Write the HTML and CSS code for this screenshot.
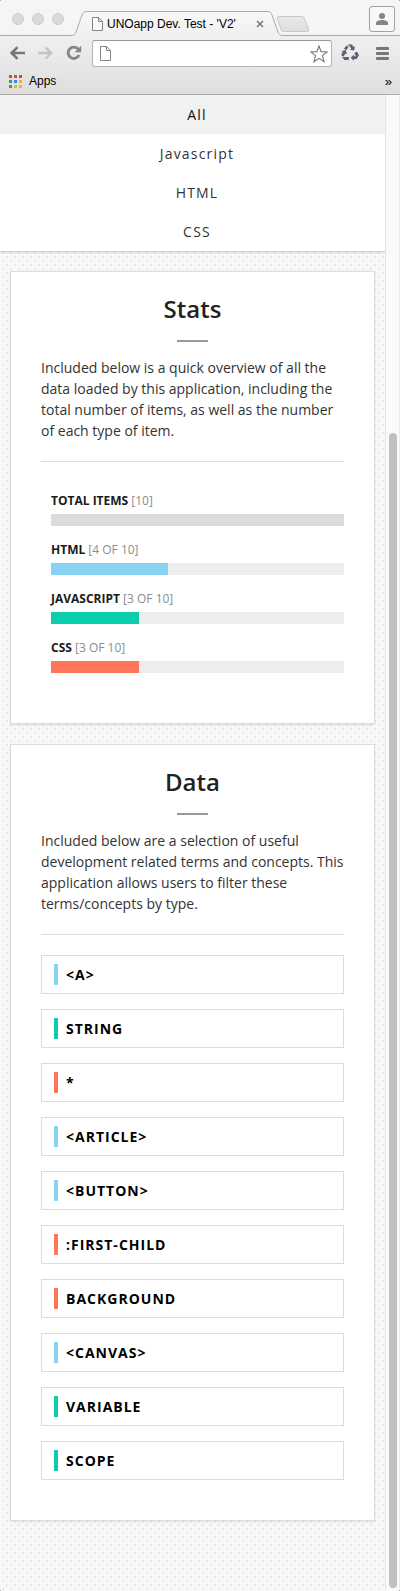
FILE: index.html
```html
<!DOCTYPE html>
<html lang="en">
<head>
<meta charset="utf-8">
<title>UNOapp Dev. Test - 'V2'</title>
<link rel="stylesheet" href="styles.css">
</head>
<body>
<div class="window">
  <header class="chrome">
    <div class="tabstrip">
      <svg class="tab-shape" width="400" height="36" viewBox="0 0 400 36">
        <defs>
          <linearGradient id="tabfill" x1="0" y1="0" x2="0" y2="1"><stop offset="0" stop-color="#f8f8f8"/><stop offset="1" stop-color="#f0f0f0"/></linearGradient>
          <linearGradient id="newfill" x1="0" y1="0" x2="0" y2="1"><stop offset="0" stop-color="#e9e9e9"/><stop offset="1" stop-color="#dedede"/></linearGradient>
        </defs>
        <path d="M0 35.5H71C74 35.5 75 34.5 76 32L82 15C83.200 12.500 84 11.500 87 11.500H267C270 11.500 271 12.500 272 15L278 32C279 34.500 280 35.500 283 35.500H400V36H0Z" fill="url(#tabfill)"/>
        <path d="M0 35.5H71C74 35.5 75 34.5 76 32L82 15C83.200 12.500 84 11.500 87 11.500H267C270 11.500 271 12.500 272 15L278 32C279 34.500 280 35.500 283 35.500H400" fill="none" stroke="#aaa"/>
        <path d="M279 16.500H301C303 16.500 304 17 304.500 19L308.500 29C309 31 308.500 31.500 307 31.500H284C282 31.500 281.500 31 281 29L277.500 19C277 17 277.500 16.500 279 16.500Z" fill="url(#newfill)" stroke="#c8c8c8"/>
      </svg>
      <div class="lights"><i class="light"></i><i class="light"></i><i class="light"></i></div>
      <div class="tab">
        <svg width="11" height="14" viewBox="0 0 11 14"><path d="M.5.5H6.500L10.500 4.500V13.500H.5ZM6.500.5V4.500H10.500" fill="#fafafa" stroke="#858585"/></svg>
        <span class="tab-title">UNOapp Dev. Test - 'V2'</span>
        <svg class="close" width="8" height="8" viewBox="0 0 8 8"><path d="M1 1L7 7M7 1L1 7" stroke="#777" stroke-width="1.500"/></svg>
      </div>
      <div class="profile"><svg width="12" height="12" viewBox="0 0 12 12"><circle cx="6" cy="3" r="3" fill="#858585"/><path d="M0 12V10C0 8 3 7 6 7S12 8 12 10V12Z" fill="#858585"/></svg></div>
    </div>
    <div class="toolbar">
      <svg class="back" width="15" height="14" viewBox="0 0 15 14"><path d="M15 7H2M7.500 1.200L1.700 7L7.500 12.800" fill="none" stroke="#777" stroke-width="2.600"/></svg>
      <svg class="forward" width="15" height="14" viewBox="0 0 15 14"><path d="M0 7H13M7.500 1.200L13.300 7L7.500 12.800" fill="none" stroke="#c4c4c4" stroke-width="2.300"/></svg>
      <svg class="reload" width="16" height="16" viewBox="0 0 16 16"><path d="M12.300 4.200A5.700 5.700 0 1 0 13.100 10" fill="none" stroke="#858585" stroke-width="2.800"/><path d="M15.200 .8V7.300H8.700Z" fill="#858585"/></svg>
      <div class="address">
        <svg width="11" height="15" viewBox="0 0 11 15"><path d="M.5.5H6.500L10.500 4.500V14.500H.5ZM6.500.5V4.500H10.500" fill="#fff" stroke="#858585"/></svg>
        <svg class="star" width="18" height="18" viewBox="0 0 18 18"><path d="M9 1L11.100 6.600L17.200 6.900L12.400 10.600L14.100 16.700L9 13.300L3.900 16.700L5.600 10.600L.8 6.900L6.900 6.600Z" fill="#fff" stroke="#777" stroke-width="1.100"/></svg>
      </div>
      <svg class="recycle" width="18" height="18" viewBox="0 0 18 18" fill="#59636e">
        <path d="M6.500.5H11L12.700 3.200L14.200 2.300L13 6.600L8.700 5.700L10.200 4.800L8.600 2.200Z"/><path d="M5.500 1.500L7.600 2.700L5.500 6.300L2.900 4.700Z"/>
        <path d="M16 7.500L17.900 11L15.700 15H13V16.700L9.600 13.700L13 10.800V12.200H15L13.200 9.200Z"/>
        <path d="M.3 7.200L4.700 6.100L6 10.500L4.300 9.600L2.900 12.200H1.200L.3 10.200L1.900 8Z"/><path d="M1.200 13H7.800V16H3.200Z"/>
      </svg>
      <div class="menu"><i class="menu-line"></i><i class="menu-line"></i><i class="menu-line"></i></div>
    </div>
    <div class="bookmarks">
      <div class="apps-grid"><i class="red"></i><i class="red"></i><i class="red"></i><i class="green"></i><i class="blue"></i><i class="yellow"></i><i class="green"></i><i class="yellow"></i><i class="yellow"></i></div>
      <span class="apps-label">Apps</span><span class="more">»</span>
    </div>
  </header>
  <div class="viewport">
    <main class="page">
      <nav class="filters">
        <a class="filter active">All</a><a class="filter">Javascript</a><a class="filter">HTML</a><a class="filter">CSS</a>
      </nav>
      <section class="card stats">
        <h2 class="heading">Stats</h2>
        <p class="intro">Included below is a quick overview of all the data loaded by this application, including the total number of items, as well as the number of each type of item.</p>
        <div class="bars">
          <div class="stat"><div class="label"><b>Total Items</b> [10]</div><div class="track"><div class="fill total" style="width:100%"></div></div></div>
          <div class="stat"><div class="label"><b>HTML</b> [4 of 10]</div><div class="track"><div class="fill html" style="width:40%"></div></div></div>
          <div class="stat"><div class="label"><b>Javascript</b> [3 of 10]</div><div class="track"><div class="fill js" style="width:30%"></div></div></div>
          <div class="stat"><div class="label"><b>CSS</b> [3 of 10]</div><div class="track"><div class="fill css" style="width:30%"></div></div></div>
        </div>
      </section>
      <section class="card data">
        <h2 class="heading">Data</h2>
        <p class="intro">Included below are a selection of useful development related terms and concepts. This application allows users to filter these terms/concepts by type.</p>
        <div class="terms">
          <div class="term"><i class="mark html"></i>&lt;a&gt;</div>
          <div class="term"><i class="mark js"></i>String</div>
          <div class="term"><i class="mark css"></i>*</div>
          <div class="term"><i class="mark html"></i>&lt;article&gt;</div>
          <div class="term"><i class="mark html"></i>&lt;button&gt;</div>
          <div class="term"><i class="mark css"></i>:first-child</div>
          <div class="term"><i class="mark css"></i>background</div>
          <div class="term"><i class="mark html"></i>&lt;canvas&gt;</div>
          <div class="term"><i class="mark js"></i>Variable</div>
          <div class="term"><i class="mark js"></i>Scope</div>
        </div>
      </section>
    </main>
    <aside class="scrollbar"><div class="thumb"></div></aside>
  </div>
</div>
</body>
</html>
```
FILE: styles.css
```css
* { box-sizing: border-box; }
html { background: #000; }
body { margin: 0; font-family: "Open Sans", sans-serif; }
svg { display: block; flex: none; }
.window { width: 400px; height: 1591px; display: flex; flex-direction: column; overflow: hidden; border-radius: 2px; background: #fafafa; }
.chrome { height: 95px; flex: none; background: linear-gradient(#f6f6f6 0, #f0f0f0 36px, #dedede 94px); border-bottom: 1px solid #adadad; font-family: "Liberation Sans", sans-serif; color: #000; }
.tabstrip { height: 36px; position: relative; display: flex; background: #f5f5f5; }
.tab-shape { position: absolute; left: 0; top: 0; }
.lights { position: relative; display: flex; gap: 8px; padding: 13px 0 0 12px; width: 92px; }
.light { width: 12px; height: 12px; border-radius: 50%; background: #dadada; border: 1px solid #cbcbcb; }
.tab { position: relative; display: flex; align-items: center; width: 172px; padding-top: 12px; }
.tab-title { font-size: 12px; margin-left: 4px; white-space: nowrap; }
.close { margin-left: auto; }
.profile { position: relative; margin: 6px 5px 0 auto; width: 26px; height: 26px; border: 1px solid #a2a2a2; border-radius: 3px; display: flex; align-items: center; justify-content: center; background: #f8f8f8; }
.toolbar { height: 34px; display: flex; align-items: center; padding: 0 11px 0 10px; }
.forward { margin-left: 13px; }
.reload { margin-left: 13px; }
.address { margin: 1px 0 0 10px; width: 240px; height: 27px; padding: 0 3px 0 7px; display: flex; align-items: center; justify-content: space-between; border: 1px solid #b5b5b5; border-top-color: #999; border-radius: 3px; background: #fff; }
.recycle { margin-left: 9px; }
.menu { margin-left: auto; width: 13px; display: grid; gap: 2px; }
.menu-line { height: 3px; border-radius: 1px; background: #777; }
.bookmarks { height: 22px; display: flex; align-items: center; padding: 0 8px 0 9px; font-size: 12px; }
.apps-grid { display: grid; grid-template-columns: repeat(3, 3px); gap: 2px; }
.apps-grid i { height: 3px; }
.red { background: #f03c37; }
.green { background: #3c9f55; }
.blue { background: #338af5; }
.yellow { background: #fab01e; }
.apps-label { margin-left: 7px; }
.more { margin-left: auto; font-size: 13px; }
.viewport { flex: 1; display: flex; }
.page { width: 385px; background-color: #fafafa; background-image: conic-gradient(from 0deg at 2px 2px, transparent 75%, #e7e7e7 0), conic-gradient(from 0deg at 2px 2px, transparent 75%, #e7e7e7 0), repeating-linear-gradient(45deg, #fbfbfb 0, #fbfbfb 1.4px, #f5f5f5 1.4px, #f5f5f5 2.828px); background-size: 8px 8px; background-position: 2px 5px, 6px 1px, 0 0; }
.filters { display: flex; flex-direction: column; background: #fff; border-bottom: 1px solid #d2d2d2; box-shadow: 0 1px 2px #0000001a; }
.filter { height: 39px; padding-left: 9px; text-align: center; font-size: 14px; line-height: 39px; letter-spacing: 1.2px; color: #333; }
.active { background: #f0f2f1; color: #111; }
.card { margin: 19px 10px 0; padding: 20px 30px 0; border: 1px solid #dcdcdc; background: #fff; box-shadow: 0 1px 2px #0000001a; }
.stats { height: 453px; }
.data { height: 777px; margin-top: 20px; }
.heading { margin: 0; font-size: 24px; font-weight: 600; line-height: 34px; color: #222; text-align: center; }
.heading::after { content: ""; display: block; width: 31px; height: 2px; margin: 14px auto 0; background: #999; }
.intro { margin: 0; padding: 15px 0 20px; height: 120px; border-bottom: 1px solid #dcdcdc; font-size: 14px; line-height: 21px; color: #333; }
.bars { padding: 29px 0 0 10px; display: grid; gap: 14px; }
.label { height: 23px; font-size: 12px; line-height: 20px; color: #8c8c8c; text-transform: uppercase; }
.label b { color: #1a1a1a; }
.track { height: 12px; background: #eee; }
.fill { height: 12px; }
.total { background: #dcdcdc; }
.html { background: #85d2f2; }
.js { background: #0bcfac; }
.css { background: #ff755a; }
.terms { display: grid; gap: 15px; padding-top: 20px; }
.term { height: 39px; display: flex; align-items: center; gap: 8px; padding-left: 12px; border: 1px solid #dcdcdc; font-size: 14px; font-weight: 700; letter-spacing: 1px; text-transform: uppercase; color: #000; }
.mark { width: 4px; height: 21px; }
.scrollbar { width: 15px; padding: 338px 0 0 3px; border-left: 1px solid #e5e5e5; border-right: 1px solid #ededed; background: #fafafa; }
.thumb { width: 8px; height: 1155px; border-radius: 4px; background: #c1c1c1; }
```
